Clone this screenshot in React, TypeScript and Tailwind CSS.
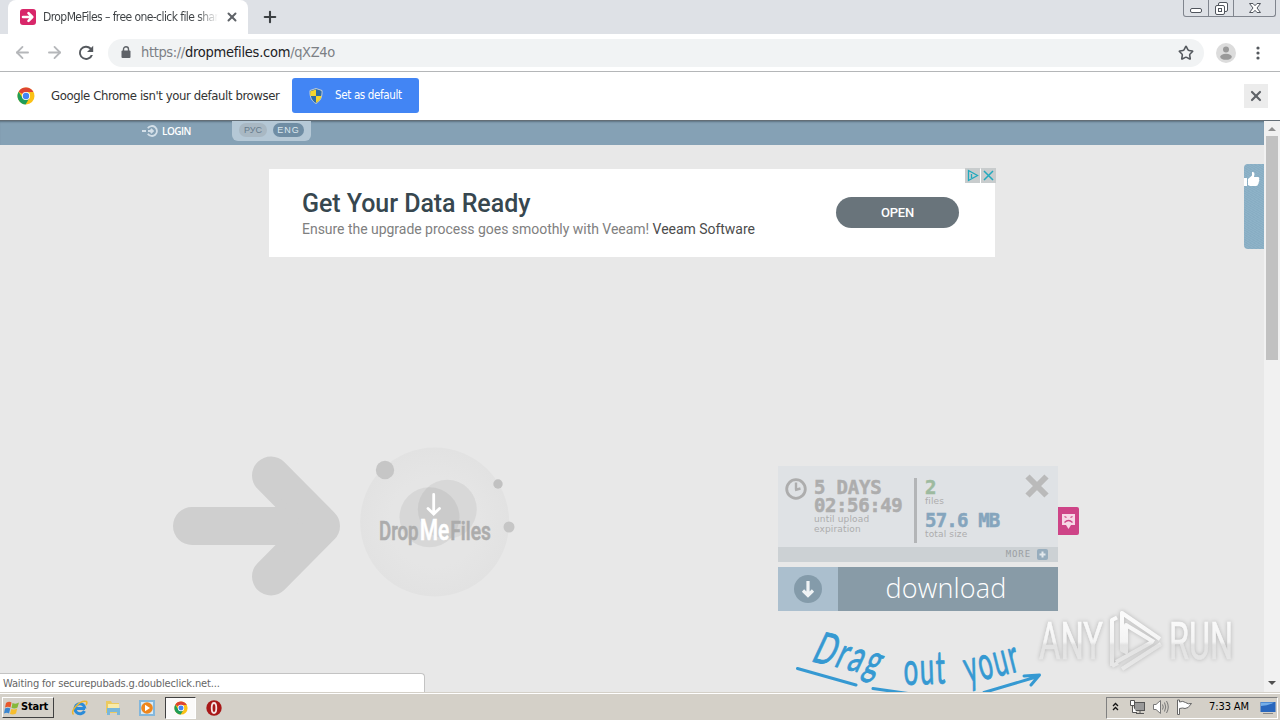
import React from 'react';
import { ArrowLeft, ArrowRight, Plus, RotateCw, Star, X } from 'lucide-react';

const stats = [
  { value: '2', label: 'files', color: 'text-[#9dba9f]' },
  { value: '57.6 MB', label: 'total size', color: 'text-[#85a5bd]' },
];

const hint = [
  { word: 'Drag', size: 44, spacing: 4, place: 'translate(810 661) rotate(13) skewX(-12) scale(.64 1)' },
  { word: 'out', size: 46, spacing: 3, place: 'translate(904 685) rotate(-2) scale(.56 1)' },
  { word: 'your', size: 47, spacing: 3, place: 'translate(968 684) rotate(-14) scale(.53 1)' },
];

const ChromeLogo: React.FC<{ className?: string }> = ({ className }) => (
  <svg viewBox="0 0 18 18" className={className}>
    <circle cx="9" cy="9" r="8.5" fill="#fbc116" />
    <path d="M9 9 L1.6 4.8 A8.5 8.5 0 0 1 16.4 5 H9Z" fill="#dd4433" />
    <path d="M1.6 4.8 A8.5 8.5 0 0 0 8.6 17.5 L12.4 11 L5.6 11Z" fill="#1f9d58" />
    <circle cx="9" cy="9" r="4.1" fill="#fff" />
    <circle cx="9" cy="9" r="3.2" fill="#4285f4" />
  </svg>
);

const WindowButtons: React.FC = () => (
  <div className="flex h-[17px] w-[93px] rounded-b-[3px] border border-t-0 border-[#80858e] text-[#50555d]">
    <div className="flex w-[25px] items-end justify-center border-r border-[#80858e] pb-[3px]">
      <div className="h-[5px] w-3 rounded-[2px] border border-[#50555d] bg-white" />
    </div>
    <div className="flex w-[25px] items-start justify-center border-r border-[#80858e] pt-0.5">
      <svg viewBox="0 0 13 13" className="h-[13px] w-[13px]" fill="#fff" stroke="currentColor">
        <rect x="3.5" y=".5" width="9" height="9" rx="1.5" />
        <rect x=".5" y="3.5" width="9" height="9" rx="1.5" />
        <rect x="3.5" y="6.5" width="3" height="3" />
      </svg>
    </div>
    <div className="flex flex-1 items-start justify-center pt-[3px]">
      <svg viewBox="0 0 12 10" className="h-[10px] w-3" fill="#fff" stroke="currentColor">
        <path d="M.5 .5H4L6 2.7L8 .5H11.5L8 5L11.5 9.5H8L6 7.3L4 9.5H.5L4 5Z" />
      </svg>
    </div>
  </div>
);

const TabStrip: React.FC = () => (
  <div className="flex h-[34px] shrink-0 justify-between bg-[#dee1e6]">
    <div className="flex">
      <div className="ml-2 flex w-[240px] items-center rounded-t-lg bg-white pl-3">
        <svg viewBox="0 0 16 16" className="h-4 w-4 shrink-0">
          <rect width="16" height="16" rx="3" fill="#d8276a" />
          <path d="M3 8H12M8.5 4.2L12.3 8L8.5 11.8" fill="none" stroke="#fff" strokeWidth="2.6" strokeLinecap="round" strokeLinejoin="round" />
        </svg>
        <div className="ml-[7px] w-[175px] overflow-hidden whitespace-nowrap bg-gradient-to-r from-[#3c4043] from-88% to-transparent bg-clip-text text-[12px] tracking-[-0.58px] text-transparent">
          DropMeFiles – free one-click file shar
        </div>
        <X className="ml-[7px] h-[14px] w-[14px] shrink-0 text-[#5f6368]" strokeWidth={3.4} />
      </div>
      <Plus className="ml-[13px] mt-2 h-[18px] w-[18px] text-[#3c4043]" strokeWidth={2.8} />
    </div>
    <div className="mr-1">
      <WindowButtons />
    </div>
  </div>
);

const Toolbar: React.FC = () => (
  <div className="flex h-[38px] shrink-0 items-center border-b border-[#b4b6b8] bg-white">
    <ArrowLeft className="ml-[13px] h-[19px] w-[19px] text-[#b5b7ba]" strokeWidth={2.3} />
    <ArrowRight className="ml-[13px] h-[19px] w-[19px] text-[#b5b7ba]" strokeWidth={2.3} />
    <svg viewBox="0 0 16 16" className="ml-3.5 h-4 w-4" fill="#55595e">
      <path d="M13.2 2.8A7.1 7.1 0 1 0 14.9 10H12.8A5.2 5.2 0 1 1 11.8 4.2L9 7H15.2V.8Z" />
    </svg>
    <div className="ml-[14px] flex h-7 w-[1096px] items-center rounded-full bg-[#f1f3f4] pl-[13px] pr-2.5">
      <svg viewBox="0 0 10 13" className="h-[13px] w-[10px]">
        <rect x=".5" y="4.5" width="9" height="7.5" rx="1" fill="#5f6368" />
        <path d="M2.5 5V3.2a2.5 2.5 0 0 1 5 0V5" fill="none" stroke="#5f6368" strokeWidth="1.4" />
      </svg>
      <div className="ml-2.5 flex-1 whitespace-nowrap text-[14.5px] tracking-[-0.36px] text-[#7c8085]">
        https://<span className="tracking-[-0.25px] text-[#202124]">dropmefiles.com</span>/qXZ4o
      </div>
      <Star className="h-4 w-4 text-[#55595e]" strokeWidth={2.4} />
    </div>
    <svg viewBox="0 0 20 20" className="ml-3 h-5 w-5">
      <circle cx="10" cy="10" r="10" fill="#dcdcdc" />
      <circle cx="10" cy="6.5" r="3" fill="#999" />
      <ellipse cx="10" cy="13.8" rx="5.8" ry="3" fill="#999" />
    </svg>
    <svg viewBox="0 0 4 14" className="ml-5 h-3.5 w-1" fill="#55595e">
      <circle cx="2" cy="2" r="1.6" />
      <circle cx="2" cy="7" r="1.6" />
      <circle cx="2" cy="12" r="1.6" />
    </svg>
  </div>
);

const InfoBar: React.FC = () => (
  <div className="flex h-[49px] shrink-0 items-center border-b border-[#646e76] bg-white pb-px">
    <ChromeLogo className="ml-[17px] h-[18px] w-[18px]" />
    <div className="ml-4 w-[228px] whitespace-nowrap text-[13px] tracking-[-0.4px] text-[#333]">
      Google Chrome isn't your default browser
    </div>
    <button className="ml-[13px] flex h-[35px] w-[127px] items-center rounded-[3px] bg-[#4285f4] pl-[17px] text-[11.5px] tracking-[-0.35px] text-white">
      <svg viewBox="0 0 14 16" className="mr-[12px] h-4 w-3.5">
        <path d="M7 .5L13 2.5C13.5 9 11 13.5 7 15.5C3 13.5 .5 9 1 2.5Z" fill="#2d6ca8" stroke="#c5cfd6" />
        <path d="M7 1.5V8H1.5C1.2 6 1.3 4.5 1.5 3.2Z" fill="#f5d52f" />
        <path d="M7 8H12.5C12 11 10 13.5 7 14.7Z" fill="#f5d52f" />
      </svg>
      Set as default
    </button>
    <div className="ml-auto mr-3 flex h-6 w-6 items-center justify-center bg-[#ececec]">
      <X className="h-4 w-4 text-[#5f6368]" strokeWidth={3.2} />
    </div>
  </div>
);

const SiteHeader: React.FC = () => (
  <div className="flex h-6 items-start bg-[#85a1b5] shadow-[inset_0_2px_2px_-1px_#5d7382]">
    <svg viewBox="0 0 16 12" className="ml-[142px] mt-1 h-3 w-4" fill="none" stroke="#d3dfe8" strokeWidth="1.8">
      <path d="M0 6H4M5.8 3.2A5 5 0 1 1 5.8 8.8" />
      <path d="M6 6H11M8.8 3.8L11 6L8.8 8.2" />
    </svg>
    <span className="ml-1 mt-[2px] w-7 font-['Open_Sans'] text-[10px] font-semibold leading-4 tracking-[-0.5px] text-white">LOGIN</span>
    <div className="ml-[42px] flex h-5 w-[79px] items-start gap-1.5 rounded-b-md bg-[#b5c8d6] pl-[7px] pt-0.5 font-['Liberation_Sans'] text-[9px] leading-[14px]">
      <span className="h-[14px] w-7 rounded-full bg-[#a9b8c3] text-center text-[#657b8c]">РУС</span>
      <span className="h-[14px] w-[31px] rounded-full bg-[#6f8da4] text-center tracking-[1px] text-[#dde8ef]">ENG</span>
    </div>
  </div>
);

const AdBanner: React.FC = () => (
  <div className="relative ml-[269px] mt-6 flex h-[88px] w-[726px] items-start bg-white font-[Roboto]">
    <div className="ml-[33px] mt-5">
      <h2 className="whitespace-nowrap text-[25px] font-medium leading-[30px] tracking-[-0.05px] text-[#37474f]">Get Your Data Ready</h2>
      <p className="-mt-px whitespace-nowrap text-[14px] leading-[22px] tracking-[-0.03px] text-[#808080]">
        Ensure the upgrade process goes smoothly with Veeam! <span className="text-[#4c4c4c]">Veeam Software</span>
      </p>
    </div>
    <div className="ml-auto mr-9 mt-7 flex h-[31px] w-[123px] items-center justify-center rounded-full bg-[#69747b] text-[13px] font-medium tracking-[-0.2px] text-white">
      OPEN
    </div>
    <div className="absolute -right-px -top-px flex gap-px">
      <svg viewBox="0 0 15 15" className="h-[15px] w-[15px] bg-[#c8cccd]" fill="none" stroke="#21a9be" strokeWidth="1.3">
        <path d="M3.5 2.5V12.5L12.5 7.5ZM6.5 6V10" />
      </svg>
      <svg viewBox="0 0 15 15" className="h-[15px] w-[15px] bg-[#c8cccd]" fill="none" stroke="#21a9be" strokeWidth="1.5">
        <path d="M3 3L12 12M12 3L3 12" />
      </svg>
    </div>
  </div>
);

const BigArrow: React.FC = () => (
  <svg viewBox="0 0 168 140" className="ml-[172px] mt-[10px] h-[140px] w-[168px]" fill="none" stroke="#cfcfcf" strokeWidth="38" strokeLinecap="round" strokeLinejoin="round">
    <path d="M20 70H140M99 19.5L149 70L99 120.5" />
    <path d="M110 45L130 70L110 95Z" fill="#cfcfcf" strokeWidth="4" />
  </svg>
);

const SiteLogo: React.FC = () => (
  <svg viewBox="360 446 156 152" className="ml-5 h-[152px] w-[156px]">
    <defs>
      <radialGradient id="disc">
        <stop offset="0.6" stopColor="#e5e5e5" />
        <stop offset="1" stopColor="#e2e2e2" />
      </radialGradient>
    </defs>
    <circle cx="434.7" cy="522" r="74.5" fill="url(#disc)" />
    <circle cx="447.3" cy="509.3" r="29.5" fill="#000" fillOpacity=".055" />
    <circle cx="429.5" cy="517.3" r="30" fill="#000" fillOpacity=".06" />
    <circle cx="385" cy="470" r="9.2" fill="#c6c6c6" />
    <circle cx="498" cy="484" r="4.7" fill="#c1c1c1" />
    <circle cx="509" cy="527" r="5.5" fill="#c6c6c6" />
    <path d="M433.7 494.5V513M428 508.5L433.7 514L439.5 508.5" fill="none" stroke="#fff" strokeWidth="2.8" strokeLinecap="round" />
    <g fontFamily="Roboto" fontWeight="500" fill="#acacac" stroke="#acacac" strokeWidth=".6">
      <text x="379" y="540" fontSize="25" textLength="39.5" lengthAdjust="spacingAndGlyphs">Drop</text>
      <text x="419.7" y="540" fontSize="30" textLength="29.6" lengthAdjust="spacingAndGlyphs" fill="#fff" stroke="#fff">Me</text>
      <text x="450.3" y="540" fontSize="25" textLength="40.5" lengthAdjust="spacingAndGlyphs">Files</text>
    </g>
  </svg>
);

const UploadCard: React.FC = () => (
  <div className="relative h-24 w-[280px] bg-[#dfe2e5]">
    <div className="flex h-[81px] items-start font-['DejaVu_Sans_Mono'] text-[#adadad]">
      <svg viewBox="0 0 22 22" className="ml-[7px] mt-3 h-[22px] w-[22px]" fill="none" stroke="#adadad" strokeWidth="2.8">
        <circle cx="11" cy="11" r="9.3" />
        <path d="M11 4.5V11.5M10 12L15.5 10.5" strokeWidth="2.4" />
      </svg>
      <div className="ml-[7px] mt-3 w-[90px] whitespace-nowrap">
        <div className="text-[19px] font-bold leading-[18px] tracking-[-0.2px] [-webkit-text-stroke:0.5px]">5 DAYS</div>
        <div className="text-[19px] font-bold leading-[18px] tracking-[-0.4px] [-webkit-text-stroke:0.5px]">02:56:49</div>
        <div className="font-['DejaVu_Sans'] text-[9px] leading-[10px] tracking-[0.15px]">until upload<br />expiration</div>
      </div>
      <div className="ml-[10px] mt-3 h-[65px] w-[3px] bg-[#b3b5b7]" />
      <div className="ml-2 mt-3">
        {stats.map((stat) => (
          <div key={stat.label} className="h-[33px] whitespace-nowrap">
            <div className={`${stat.color} text-[19px] font-bold leading-[18px] tracking-[-0.8px] [-webkit-text-stroke:0.5px]`}>{stat.value}</div>
            <div className="font-['DejaVu_Sans'] text-[9px] leading-[11px] tracking-[0.15px]">{stat.label}</div>
          </div>
        ))}
      </div>
      <svg viewBox="0 0 24 24" className="ml-auto mr-[9px] mt-2 h-6 w-6" stroke="#bababa" strokeWidth="6">
        <path d="M2.5 2.5L21.5 21.5M21.5 2.5L2.5 21.5" />
      </svg>
    </div>
    <div className="flex h-[15px] items-center justify-end bg-[#ccd1d4] pr-2.5 text-[#9b9fa3]">
      <span className="font-['DejaVu_Sans_Mono'] text-[9px] tracking-[0.9px]">MORE</span>
      <svg viewBox="0 0 11 11" className="ml-1.5 h-[11px] w-[11px]">
        <rect width="11" height="11" rx="2" fill="#97adbd" />
        <path d="M5.5 2.5V8.5M2.5 5.5H8.5" stroke="#e2e8ec" strokeWidth="2" />
      </svg>
    </div>
    <svg viewBox="0 0 21 28" className="absolute left-[280px] top-[41px] h-7 w-[21px]">
      <path d="M0 0H19Q21 0 21 2V26Q21 28 19 28H0Z" fill="#ce4487" />
      <path d="M4 7H17V18H13L10.5 22L8 18H4Z" fill="#f6d8e6" />
      <path d="M6.5 9.500L8.500 10.500M14.500 9.500L12.500 10.500M6.500 15.500Q10.500 11.500 14.500 15.500" fill="none" stroke="#ce4487" strokeWidth="1.3" />
    </svg>
  </div>
);

const DownloadButton: React.FC = () => (
  <div className="mt-[5px] flex h-11 w-[280px] bg-[#889ba7]">
    <div className="flex w-[60px] items-center justify-center bg-[#abbfce]">
      <svg viewBox="0 0 28 28" className="h-7 w-7">
        <circle cx="14" cy="14" r="14" fill="#849baa" />
        <path d="M14 6V20M9 15.5L14 20.5L19 15.5" fill="none" stroke="#f0f3f5" strokeWidth="3.2" />
      </svg>
    </div>
    <div className="flex-1 pr-1 text-center font-['Open_Sans'] text-[27px] font-light leading-[41px] tracking-[0.15px] text-white">download</div>
  </div>
);

// handwritten call to action, runs off the bottom of the viewport
const DragHint: React.FC = () => (
  <svg viewBox="790 617 260 76" className="ml-3 mt-1.5 h-[76px] w-[260px]" fill="none" stroke="#3599d2" strokeLinecap="round" strokeLinejoin="round">
    <g fontFamily="Lato" fill="#3599d2" strokeWidth=".9">
      {hint.map((h) => (
        <text key={h.word} transform={h.place} fontSize={h.size} letterSpacing={h.spacing}>{h.word}</text>
      ))}
    </g>
    <path d="M797.5 668.5L856 685M873 688.5L908 693.5M984 692.5L1036 677M1024 676L1039.5 675L1031 685" strokeWidth="3" />
  </svg>
);

const SideTab: React.FC = () => (
  <div className="absolute right-4 top-[43px] h-[85px] w-5 rounded-l-[4px] bg-[#8bb0c6] bg-[repeating-linear-gradient(30deg,#84a9bf66_0_1px,#92b6ca66_1px_2px)]">
    <svg viewBox="0 0 16 16" className="mt-[7px] h-4 w-4" fill="#fff">
      <path d="M0 7H3V15H0ZM4 8L8 4.5V1Q10.5 .5 10.5 3L10 6H14Q16 6.5 15 8.5Q16 10 14.7 11Q15 12.5 14 13.2Q14 15 12 15H6L4 14Z" />
    </svg>
  </div>
);

const Scrollbar: React.FC = () => (
  <div className="flex w-4 shrink-0 flex-col items-center bg-[#f1f1f1]">
    <svg viewBox="0 0 8 4" className="mt-1.5 h-1 w-2" fill="#8f8f8f"><path d="M4 0L8 4H0Z" /></svg>
    <div className="mt-[5px] h-[224px] w-3 bg-[#c1c1c1]" />
    <svg viewBox="0 0 8 4" className="mb-[7px] mt-auto h-1 w-2" fill="#505050"><path d="M0 0H8L4 4Z" /></svg>
  </div>
);

const Watermark: React.FC = () => (
  <svg viewBox="1030 604 212 76" className="absolute bottom-3 right-[38px] h-[76px] w-[212px] drop-shadow-[0_0_2px_rgba(0,0,0,0.22)]">
    <defs>
      <linearGradient id="fade" x1="0" y1="620" x2="0" y2="672" gradientUnits="userSpaceOnUse">
        <stop offset="0" stopColor="#fafafa" />
        <stop offset=".42" stopColor="#f4f4f4" />
        <stop offset=".48" stopColor="#e2e2e2" />
        <stop offset="1" stopColor="#e9e9e9" />
      </linearGradient>
    </defs>
    <g fontFamily="Roboto" fontSize="51" fill="url(#fade)" stroke="url(#fade)" strokeWidth=".6">
      <text x="1039" y="659" textLength="64" lengthAdjust="spacingAndGlyphs">ANY</text>
      <text x="1169" y="659" textLength="64" lengthAdjust="spacingAndGlyphs">RUN</text>
    </g>
    <g fill="none" stroke="url(#fade)" strokeWidth="4" strokeLinejoin="round">
      <path d="M1112 666V620L1117 617.5M1112 666L1118 663" />
      <path d="M1160 639L1122 613V650L1126 652V625L1154 642" />
      <path d="M1161 644L1122 669M1116 662L1152 642" />
    </g>
  </svg>
);

const StartButton: React.FC = () => (
  <button className="flex h-[21px] w-[52px] items-center border border-b-[#404040] border-l-white border-r-[#404040] border-t-white bg-[#d4d0c8] pl-px text-[11px] font-bold tracking-[-0.2px] text-black">
    <svg viewBox="0 0 16 16" className="mr-px h-4 w-4 shrink-0">
      <path d="M2 3Q5 1 7.5 2.5L6.5 7.5Q4 6 1 7.5Z" fill="#e8582c" />
      <path d="M8.5 3Q12 4.5 15 2.5L13.5 7.5Q11 9 7.5 8Z" fill="#85b83a" />
      <path d="M1 8.5Q4 7 6.3 8.5L5 13.5Q3 12 0 13.5Z" fill="#3b86d0" />
      <path d="M7.3 9Q10 10 13.2 8.5L12 13.5Q9 15 6 14Z" fill="#f6bd2d" />
    </svg>
    Start
  </button>
);

const Taskbar: React.FC = () => (
  <div className="flex h-7 shrink-0 items-center border-t border-[#d4d0c8] bg-[#d4d0c8] pl-0.5 shadow-[inset_0_1px_0_#fff]">
    <div className="mt-0.5 flex items-center">
      <StartButton />
      <svg viewBox="0 0 18 18" className="ml-[17px] h-[18px] w-[18px]" fill="none">
        <path d="M14 9.5H5M13.5 12A5 5 0 1 1 14 9.5" stroke="#2b8bd8" strokeWidth="3" />
        <path d="M2.5 15.5C-1 12 9 .5 15.5 2.5Q16.5 4 15 6" stroke="#edb62d" strokeWidth="1.5" />
      </svg>
      <svg viewBox="0 0 18 18" className="ml-[15px] h-[18px] w-[18px]">
        <path d="M2 2H7L8 4H15V14H2Z" fill="#ecca60" />
        <path d="M4 5H15V9H4Z" fill="#f9eba8" />
        <path d="M3 9H16V16H13V13H6V16H3Z" fill="#79b7da" />
      </svg>
      <svg viewBox="0 0 18 18" className="ml-[16px] h-[18px] w-[18px]">
        <rect x="1" y="1" width="16" height="16" fill="#83b7dc" />
        <rect x="3" y="3" width="12" height="12" fill="#d8ebf7" />
        <circle cx="9" cy="9" r="5.8" fill="#ee861d" />
        <path d="M7 5.8L12 9L7 12.2Z" fill="#fff" />
      </svg>
      <div className="ml-[9px] flex h-[22px] w-[31px] items-center justify-center border border-b-white border-l-[#404040] border-r-white border-t-[#404040] bg-[#fbfaf9]">
        <ChromeLogo className="h-[14px] w-[14px]" />
      </div>
      <svg viewBox="0 0 16 16" className="ml-[10px] h-4 w-4">
        <circle cx="8" cy="8" r="7.7" fill="#a81818" />
        <ellipse cx="8" cy="8" rx="2.3" ry="5" fill="none" stroke="#f6e4e4" strokeWidth="1.8" />
      </svg>
    </div>
    <div className="ml-auto mr-0.5 mt-0.5 flex h-[22px] w-[172px] items-center border border-b-white border-l-[#808080] border-r-white border-t-[#808080] pl-[5px]">
      <svg viewBox="0 0 7 9" className="-mt-0.5 h-[9px] w-[7px]" fill="none" stroke="#111" strokeWidth="1.3">
        <path d="M1 4L3.5 1.5L6 4M1 8L3.5 5.5L6 8" />
      </svg>
      <svg viewBox="0 0 17 16" className="-mt-px ml-[10px] h-4 w-[17px]" stroke="#555">
        <rect x="5.5" y="3.5" width="10" height="8" fill="#999" />
        <path d="M7 14.5H15M11 12V14" fill="none" />
        <path d="M1.5 1.5H5.5V6.5H1.5ZM3.5 7V13.5H8" fill="#fff" />
      </svg>
      <svg viewBox="0 0 17 16" className="-mt-px ml-[6px] h-4 w-[17px]" fill="none" stroke="#777">
        <path d="M1.5 5.5H4L8.5 1.5V14.5L4 10.5H1.5Z" fill="#fff" />
        <path d="M10.5 5.5Q12 8 10.5 10.5M12.5 3.5Q15 8 12.5 12.5M14.5 2Q18 8 14.5 14" />
      </svg>
      <svg viewBox="0 0 17 16" className="-mt-px ml-[7px] h-4 w-[17px]" fill="#fff" stroke="#666">
        <path d="M1.5 1V15.5H3.5V9.5Q7 8.5 9 9.5Q12 10 15.5 4.5Q12 5.5 9.5 3.5Q7 1.5 3.5 3V1Z" />
      </svg>
      <span className="ml-[16px] w-[42px] whitespace-nowrap text-[11px] tracking-[-0.1px] text-black">7:33 AM</span>
      <svg viewBox="0 0 16 14" className="ml-[9px] h-3.5 w-4">
        <path d="M.5 1H15.5V11H.5Z" fill="#2967bd" />
        <path d="M1 1.5H14Q8 5 1 5Z" fill="#75aee8" />
        <path d="M3 12.5H13" stroke="#888" />
      </svg>
    </div>
  </div>
);

const App: React.FC = () => {
  return (
    <div className="relative flex h-[720px] w-[1280px] flex-col overflow-hidden bg-white font-['DejaVu_Sans_Condensed','DejaVu_Sans',sans-serif]">
      <TabStrip />
      <Toolbar />
      <InfoBar />
      <div className="relative flex h-[571px] shrink-0 overflow-hidden">
        <div className="w-[1264px] bg-[#e8e8e8]">
          <SiteHeader />
          <AdBanner />
          <div className="mt-[189px] flex h-[246px] items-start overflow-hidden">
            <div className="flex h-[152px] items-start">
              <BigArrow />
              <SiteLogo />
            </div>
            <div className="ml-[262px] mt-5">
              <UploadCard />
              <DownloadButton />
              <DragHint />
            </div>
          </div>
        </div>
        <Scrollbar />
        <SideTab />
        <Watermark />
        <div className="absolute bottom-0 left-0 h-[19px] w-[425px] rounded-tr-[4px] border border-b-0 border-l-0 border-[#c3c3c3] bg-white pl-[3px] text-[11px] leading-[20px] tracking-[-0.15px] text-[#666]">
          Waiting for securepubads.g.doubleclick.net...
        </div>
      </div>
      <Taskbar />
    </div>
  );
};

export default App;
